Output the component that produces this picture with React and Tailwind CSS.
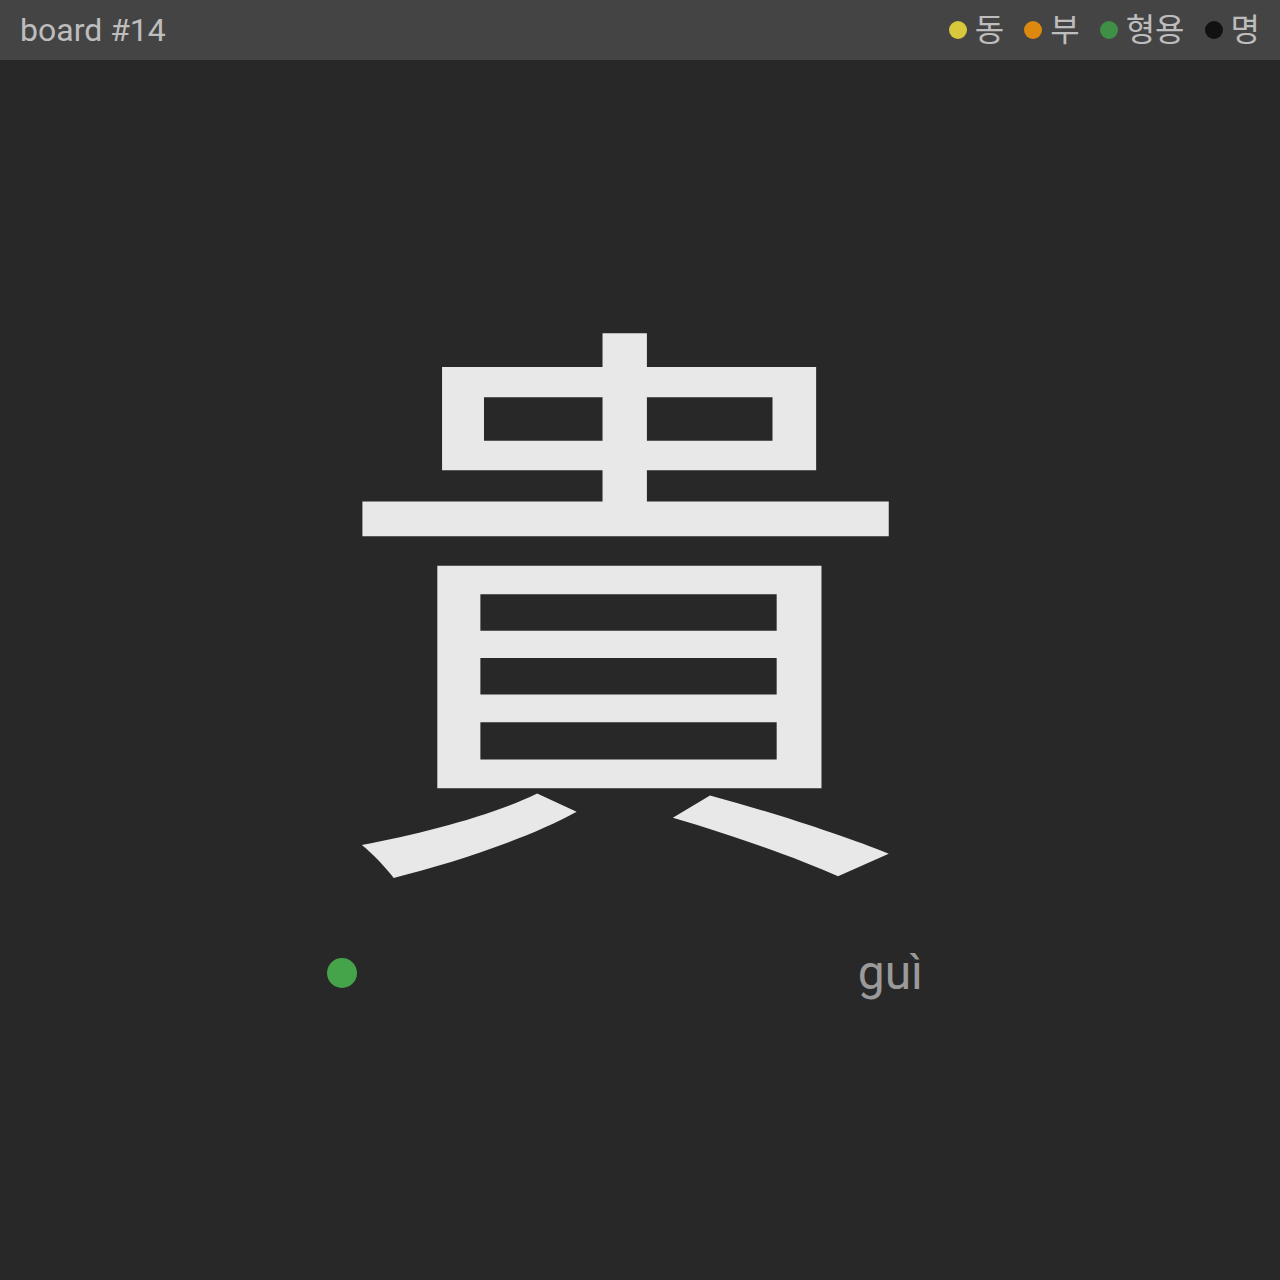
export default function App() {
  const font = { fontFamily: 'Roboto, "Noto Sans CJK KR", sans-serif' };
  return (
    <div className="w-[1280px] h-[1280px] bg-[#282828] flex flex-col" style={font}>
      <div className="h-[60px] bg-[#444444] flex items-center justify-between px-5 shrink-0">
        <div className="text-[32px] text-[#bdbdbd] leading-none">board #14</div>
        <div className="flex items-center gap-[20px] text-[32px] text-[#bdbdbd] leading-none">
          <div className="flex items-center gap-[8px]"><span className="w-[18px] h-[18px] rounded-full bg-[#d8c83c]"></span><span>동</span></div>
          <div className="flex items-center gap-[8px]"><span className="w-[18px] h-[18px] rounded-full bg-[#dd880f]"></span><span>부</span></div>
          <div className="flex items-center gap-[8px]"><span className="w-[18px] h-[18px] rounded-full bg-[#3f8f47]"></span><span>형용</span></div>
          <div className="flex items-center gap-[8px]"><span className="w-[18px] h-[18px] rounded-full bg-[#111111]"></span><span>명</span></div>
        </div>
      </div>
      <div className="flex-1 flex flex-col items-center pt-[217px] pr-[30px]">
        <div className="text-[590px] leading-none text-[#e8e8e8]" style={{ fontFamily: '"Noto Sans CJK JP", sans-serif' }}>貴</div>
        <div className="w-[596px] flex items-center justify-between mt-[82px]">
          <span className="w-[30px] h-[30px] rounded-full bg-[#45a349]"></span>
          <span className="text-[48px] text-[#9a9a9a] leading-none">guì</span>
        </div>
      </div>
    </div>
  );
}
